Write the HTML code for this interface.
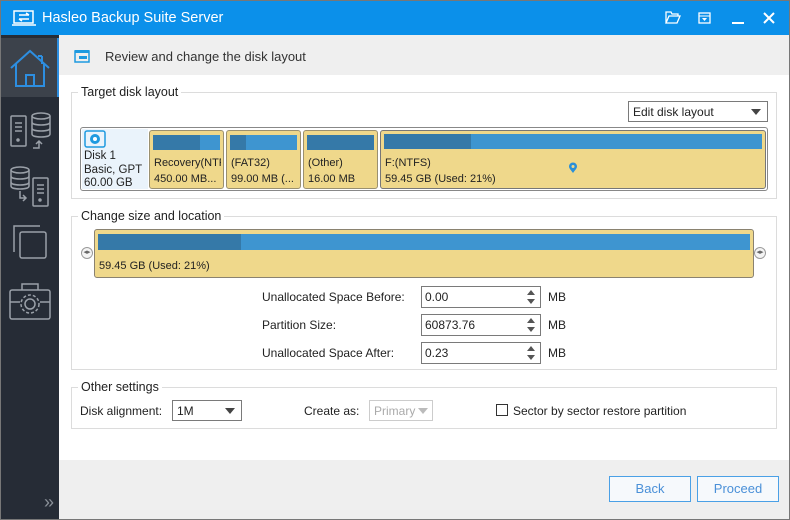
<!DOCTYPE html>
<html><head><meta charset="utf-8"><style>
*{margin:0;padding:0;box-sizing:border-box}
body{width:790px;height:520px;overflow:hidden;font-family:"Liberation Sans",sans-serif;font-size:12px;color:#222;background:#fff;position:relative}
.a{position:absolute}
.t{position:absolute;white-space:nowrap}
.grp{position:absolute;border:1px solid #dcdcdc}
.leg{position:absolute;background:#fff;padding:0 3px;font-size:12.5px;color:#222}
.part{position:absolute;background:#efd88b;border:1px solid #9a9070;border-radius:3px}
.bar{position:absolute;left:3px;right:3px;top:4px;height:15px;background:#3e95d0}
.bar i{display:block;height:100%;background:#3579a8}
.pt{position:absolute;left:4px;font-size:11px;line-height:16px;white-space:nowrap;overflow:hidden;right:2px}
.inp{position:absolute;width:120px;height:22px;border:1px solid #7a7a7a;background:#fff;padding:3px 3px;font-size:12px}
.sp{position:absolute;right:5px;top:2px;width:8px;height:16px}
.sel{position:absolute;border:1px solid #7a7a7a;background:#fff;height:21px;padding:3px 4px;font-size:12px}
.tri{position:absolute;width:0;height:0;border-left:5px solid transparent;border-right:5px solid transparent;border-top:6px solid #444}
.btn{position:absolute;width:82px;height:26px;border:1px solid #4aa0e6;background:#f6f9fc;color:#4a90d8;font-size:13px;text-align:center;line-height:24px}
</style></head><body>
<div class="a" style="left:0;top:0;width:790px;height:35px;background:#0b90ea"></div>
<svg class="a" style="left:12px;top:10px" width="24" height="16" viewBox="0 0 24 16"><rect x="2" y="1" width="19" height="12" fill="none" stroke="#fff" stroke-width="1.5"/><line x1="0" y1="15" x2="24" y2="15" stroke="#fff" stroke-width="1.5"/><path d="M7 5h10M14 3l3 2M7 9h10M7 9l3 2" stroke="#fff" stroke-width="1.5" fill="none"/></svg>
<div class="t" style="left:42px;top:10px;color:#fff;font-size:14.5px">Hasleo Backup Suite Server</div>
<svg class="a" style="left:665px;top:11px" width="16" height="13" viewBox="0 0 16 13"><path d="M1 12V1h5l1 2h6v2M1 12l3-7h11l-3 7z" fill="none" stroke="#fff" stroke-width="1.3"/></svg>
<svg class="a" style="left:698px;top:12px" width="13" height="12" viewBox="0 0 13 12"><rect x="1" y="1" width="11" height="10" fill="none" stroke="#fff" stroke-width="1.3"/><line x1="1" y1="4" x2="12" y2="4" stroke="#fff"/><path d="M4 6h5l-2.5 3z" fill="#fff"/></svg>
<div class="a" style="left:732px;top:22px;width:12px;height:2px;background:#fff"></div>
<svg class="a" style="left:763px;top:12px" width="12" height="12"><path d="M1 1l10 10M11 1L1 11" stroke="#fff" stroke-width="2"/></svg>
<div class="a" style="left:0;top:35px;width:59px;height:485px;background:#262c36"></div>
<div class="a" style="left:0;top:38px;width:59px;height:59px;background:#3c424b"></div>
<div class="a" style="left:57px;top:38px;width:2px;height:59px;background:#2d8ee0"></div>
<svg class="a" style="left:8px;top:48px" width="44" height="40" viewBox="0 0 44 40"><path d="M3 20L22 3l19 17M8 16v22h28V16M18 38V27h8v11M34 8v8M34 8h-4" fill="none" stroke="#2d8ee0" stroke-width="2"/></svg>
<svg class="a" style="left:8px;top:106px" width="44" height="44" viewBox="0 0 44 44" fill="none" stroke="#9aa0a8" stroke-width="1.5"><rect x="3" y="10" width="15" height="30" rx="1"/><path d="M7 17h7M7 21h7M7 25h7"/><circle cx="10" cy="34" r="1" fill="#9aa0a8"/><ellipse cx="33" cy="10" rx="9" ry="3"/><path d="M24 10v18c0 2 4 3 9 3s9-1 9-3V10M24 16c0 2 4 3 9 3s9-1 9-3M24 22c0 2 4 3 9 3s9-1 9-3M25 42h6v-7M28 38l3-3 3 3"/></svg>
<svg class="a" style="left:8px;top:164px" width="44" height="44" viewBox="0 0 44 44" fill="none" stroke="#9aa0a8" stroke-width="1.5"><ellipse cx="12" cy="6" rx="9" ry="3"/><path d="M3 6v16c0 2 4 3 9 3s9-1 9-3V6M3 12c0 2 4 3 9 3s9-1 9-3M3 18c0 2 4 3 9 3s9-1 9-3M12 27v7h6M15 31l3 3-3 3"/><rect x="25" y="14" width="15" height="28" rx="1"/><path d="M29 21h7M29 25h7M29 29h7"/><circle cx="32" cy="36" r="1" fill="#9aa0a8"/></svg>
<svg class="a" style="left:8px;top:220px" width="44" height="44" viewBox="0 0 44 44" fill="none" stroke="#9aa0a8" stroke-width="1.5"><path d="M6 32V6h26"/><rect x="12" y="12" width="26" height="26" rx="2"/></svg>
<svg class="a" style="left:8px;top:280px" width="44" height="42" viewBox="0 0 44 42" fill="none" stroke="#9aa0a8" stroke-width="1.5"><rect x="2" y="10" width="40" height="29" rx="2"/><path d="M14 10V4h16v6M2 22h10M32 22h10"/><circle cx="22" cy="24" r="5"/><circle cx="22" cy="24" r="9" stroke-dasharray="3 2"/></svg>
<div class="t" style="left:44px;top:492px;color:#8a9098;font-size:18px">»</div>
<div class="a" style="left:59px;top:35px;width:731px;height:40px;background:#efefef"></div>
<svg class="a" style="left:74px;top:49px" width="16" height="14"><rect x="1" y="2" width="14" height="11" fill="none" stroke="#1e9ae0" stroke-width="1.5"/><rect x="1" y="1" width="14" height="3" fill="#1e9ae0"/><rect x="5" y="7" width="8" height="3" fill="#1e9ae0"/></svg>
<div class="t" style="left:105px;top:49px;font-size:13px;color:#333">Review and change the disk layout</div>
<div class="grp" style="left:71px;top:92px;width:706px;height:107px"></div>
<div class="leg" style="left:78px;top:85px">Target disk layout</div>
<div class="sel" style="left:628px;top:101px;width:140px">Edit disk layout<div class="tri" style="right:6px;top:7px"></div></div>
<div class="a" style="left:80px;top:127px;width:688px;height:64px;border:1px solid #888;border-radius:3px;background:#fff"></div>
<div class="a" style="left:82px;top:129px;width:66px;height:60px;background:#eaf3fb"></div>
<svg class="a" style="left:84px;top:130px" width="22" height="18"><rect x="1" y="1" width="20" height="16" rx="2" fill="none" stroke="#1e9ae0" stroke-width="1.5"/><circle cx="11" cy="9" r="5" fill="#1e9ae0"/><circle cx="11" cy="9" r="2" fill="#fff"/></svg>
<div class="t" style="left:84px;top:150px;font-size:11.5px;line-height:13.5px">Disk 1<br>Basic, GPT<br>60.00 GB</div>
<div class="part" style="left:149px;top:130px;width:75px;height:59px"><div class="bar"><i style="width:70%"></i></div><div class="pt" style="top:24px">Recovery(NTFS)<br>450.00 MB...</div></div>
<div class="part" style="left:226px;top:130px;width:75px;height:59px"><div class="bar"><i style="width:24%"></i></div><div class="pt" style="top:24px">(FAT32)<br>99.00 MB (...</div></div>
<div class="part" style="left:303px;top:130px;width:75px;height:59px"><div class="bar"><i style="width:100%"></i></div><div class="pt" style="top:24px">(Other)<br>16.00 MB</div></div>
<div class="part" style="left:380px;top:130px;width:386px;height:59px;border:1.5px solid #777"><div class="bar" style="top:3px"><i style="width:23%"></i></div><div class="pt" style="top:24px">F:(NTFS)<br>59.45 GB (Used: 21%)</div>
<svg class="a" style="left:187px;top:31px" width="10" height="12"><path d="M5 11C2 7 1 6 1 4.5a4 4 0 018 0C9 6 8 7 5 11z" fill="#2a8fd8"/><circle cx="5" cy="4.5" r="1.5" fill="#efd88b"/></svg></div>
<div class="grp" style="left:71px;top:216px;width:706px;height:154px"></div>
<div class="leg" style="left:78px;top:209px">Change size and location</div>
<div class="part" style="left:94px;top:229px;width:660px;height:49px;border-color:#8a8270"><div class="bar" style="top:4px;height:16px"><i style="width:22%"></i></div><div class="pt" style="top:28px">59.45 GB (Used: 21%)</div></div>
<div class="a" style="left:81px;top:247px;width:12px;height:12px;border:1px solid #999;border-radius:50%;background:#f4f4f4;font-size:7px;text-align:center;line-height:10px;color:#666">◂▸</div>
<div class="a" style="left:754px;top:247px;width:12px;height:12px;border:1px solid #999;border-radius:50%;background:#f4f4f4;font-size:7px;text-align:center;line-height:10px;color:#666">◂▸</div>
<div class="t" style="left:262px;top:290px">Unallocated Space Before:</div>
<div class="t" style="left:262px;top:318px">Partition Size:</div>
<div class="t" style="left:262px;top:346px">Unallocated Space After:</div>
<div class="inp" style="left:421px;top:286px">0.00<svg class="sp" viewBox="0 0 8 16"><path d="M0 6l4-5 4 5zM0 10l4 5 4-5z" fill="#555"/></svg></div>
<div class="inp" style="left:421px;top:314px">60873.76<svg class="sp" viewBox="0 0 8 16"><path d="M0 6l4-5 4 5zM0 10l4 5 4-5z" fill="#555"/></svg></div>
<div class="inp" style="left:421px;top:342px">0.23<svg class="sp" viewBox="0 0 8 16"><path d="M0 6l4-5 4 5zM0 10l4 5 4-5z" fill="#555"/></svg></div>
<div class="t" style="left:548px;top:290px">MB</div>
<div class="t" style="left:548px;top:318px">MB</div>
<div class="t" style="left:548px;top:346px">MB</div>
<div class="grp" style="left:71px;top:387px;width:706px;height:42px"></div>
<div class="leg" style="left:78px;top:380px">Other settings</div>
<div class="t" style="left:80px;top:404px">Disk alignment:</div>
<div class="sel" style="left:172px;top:400px;width:70px">1M<div class="tri" style="right:6px;top:7px"></div></div>
<div class="t" style="left:304px;top:404px">Create as:</div>
<div class="sel" style="left:369px;top:400px;width:64px;border-color:#ccc;color:#aaa">Primary<div class="tri" style="right:4px;top:7px;border-top-color:#bbb"></div></div>
<div class="a" style="left:496px;top:404px;width:12px;height:12px;border:1px solid #333;background:#fff"></div>
<div class="t" style="left:513px;top:404px">Sector by sector restore partition</div>
<div class="a" style="left:59px;top:460px;width:731px;height:60px;background:#efefef"></div>
<div class="btn" style="left:609px;top:476px">Back</div>
<div class="btn" style="left:697px;top:476px">Proceed</div>
<div class="a" style="left:0;top:0;width:790px;height:520px;border:1px solid #777;pointer-events:none"></div>
</body></html>
